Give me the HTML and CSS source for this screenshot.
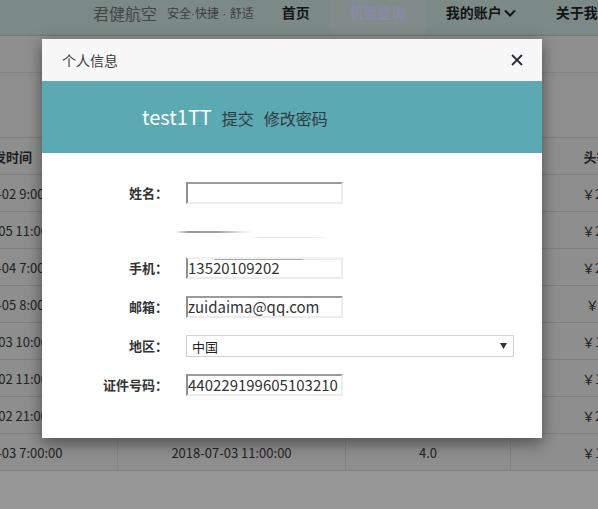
FILE: index.html
```html
<!DOCTYPE html>
<html lang="zh-CN">
<head>
<meta charset="utf-8">
<title>个人信息</title>
<link rel="stylesheet" href="styles.css">
</head>
<body>
<header class="navbar">
  <div class="brand">
    <span class="brand-name">君健航空</span>
    <span class="slogan">安全·快捷 · 舒适</span>
  </div>
  <ul class="nav">
    <li>首页</li>
    <li class="active">机票查询</li>
    <li>我的账户<svg class="chev" width="12" height="8" viewBox="0 0 12 8"><polyline points="1,1.5 6,6.5 11,1.5" fill="none" stroke="#151515" stroke-width="2"/></svg></li>
    <li>关于我们</li>
  </ul>
</header>

<section class="search">
  <div class="search-top"></div>
  <div class="search-bottom"></div>
</section>

<table class="flights">
  <thead>
    <tr><th>出发时间</th><th>到达时间</th><th>飞行时长</th><th>头等舱</th></tr>
  </thead>
  <tbody>
    <tr><td>2018-07-02 9:00:00</td><td>2018-07-02 12:00:00</td><td>3.0</td><td>￥2400</td></tr>
    <tr><td>2018-07-05 11:00:00</td><td>2018-07-05 14:00:00</td><td>3.0</td><td>￥2100</td></tr>
    <tr><td>2018-07-04 7:00:00</td><td>2018-07-04 10:00:00</td><td>3.0</td><td>￥2200</td></tr>
    <tr><td>2018-07-05 8:00:00</td><td>2018-07-05 10:00:00</td><td>2.0</td><td>￥800</td></tr>
    <tr><td>2018-07-03 10:00:00</td><td>2018-07-03 13:00:00</td><td>3.0</td><td>￥1500</td></tr>
    <tr><td>2018-07-02 11:00:00</td><td>2018-07-02 14:00:00</td><td>3.0</td><td>￥1800</td></tr>
    <tr><td>2018-07-02 21:00:00</td><td>2018-07-03 00:00:00</td><td>3.0</td><td>￥2000</td></tr>
    <tr><td>2018-07-03 7:00:00</td><td>2018-07-03 11:00:00</td><td>4.0</td><td>￥1300</td></tr>
  </tbody>
</table>

<div class="modal">
  <div class="modal-header">
    <span class="modal-title">个人信息</span>
    <svg class="close" width="12" height="12" viewBox="0 0 12 12"><path d="M1 1 L11 11 M11 1 L1 11" stroke="#2b2b33" stroke-width="1.8" fill="none"/></svg>
  </div>
  <div class="banner">
    <span class="user">test1TT</span>
    <a class="link">提交</a>
    <a class="link">修改密码</a>
  </div>
  <div class="modal-body">
    <label class="label">姓名<span class="colon">：</span></label>
    <div class="field"></div>

    <span class="label"></span>
    <div class="ghost">
      <div class="ghost-line1"></div>
      <div class="ghost-line2"></div>
    </div>

    <label class="label">手机<span class="colon">：</span></label>
    <div class="field field-phone">13520109202</div>

    <label class="label">邮箱<span class="colon">：</span></label>
    <div class="field"><span class="misspelt">zuidaima</span>@<span class="misspelt">qq</span>.com</div>

    <label class="label">地区<span class="colon">：</span></label>
    <div class="select"><span>中国</span><svg class="arrow" width="7" height="6" viewBox="0 0 7 6"><path d="M0 0 H7 L3.5 6 Z" fill="#333"/></svg></div>

    <label class="label">证件号码<span class="colon">：</span></label>
    <div class="field">440229199605103210</div>
  </div>
</div>
</body>
</html>
```
FILE: styles.css
```css
html, body {
  margin: 0;
  padding: 0;
  overflow: hidden;
  background: #979797;
  font-family: "Noto Sans CJK SC", "Noto Sans", sans-serif;
}

.navbar {
  height: 35px;
  background: #7b8a86;
  border-bottom: 1px solid #6c7673;
  display: flex;
  padding-left: 93px;
  white-space: nowrap;
}

.brand {
  display: flex;
  align-items: center;
  height: 25px;
}

.brand-name {
  font-size: 16px;
  color: #434545;
  margin-right: 10px;
}

.slogan {
  font-family: "Liberation Sans", "Noto Sans CJK SC", sans-serif;
  font-size: 12px;
  color: #3b3d3d;
}

.nav {
  list-style: none;
  margin: 0 0 0 8px;
  padding: 0;
  display: flex;
}

.nav li {
  padding: 0 20px;
  font-size: 14px;
  font-weight: bold;
  color: #141414;
  line-height: 25px;
  height: 35px;
  display: flex;
  align-items: flex-start;
}

.nav li.active {
  background: #818b89;
  color: #8a8aa6;
}

.chev {
  margin: 9px 0 0 2px;
}

.search {
  background: #8f8f8f;
}

.search-top {
  height: 36px;
  border-bottom: 1px solid #828282;
}

.search-bottom {
  height: 64px;
}

.flights {
  border-collapse: collapse;
  margin-left: -106px;
  background: #8e8e8e;
  color: #222;
  font-size: 13px;
  table-layout: fixed;
  width: 797px;
}

.flights th:nth-child(1), .flights td:nth-child(1) { width: 222px; }
.flights th:nth-child(2), .flights td:nth-child(2) { width: 227px; }
.flights th:nth-child(3), .flights td:nth-child(3) { width: 164px; }
.flights th:nth-child(4), .flights td:nth-child(4) { width: 184px; }

.flights th, .flights td {
  height: 36px;
  padding: 0;
  text-align: center;
  border-top: 1px solid #7e7e7e;
  border-bottom: 1px solid #7e7e7e;
  border-left: 1px solid #838383;
  white-space: nowrap;
  overflow: hidden;
}

.flights th {
  font-weight: bold;
  color: #1e1e1e;
}

.modal {
  position: absolute;
  left: 42px;
  top: 39px;
  width: 500px;
  background: #fff;
  box-shadow: 0 5px 15px rgba(0, 0, 0, 0.45);
}

.modal-header {
  height: 42px;
  box-sizing: border-box;
  background: #f7f7f7;
  display: flex;
  align-items: center;
  justify-content: space-between;
  padding: 0 19px 0 20px;
}

.modal-title {
  font-size: 14px;
  color: #3a3a3a;
}

.banner {
  height: 72px;
  box-sizing: border-box;
  background: #5ba9b3;
  padding: 22px 0 0 100px;
  display: flex;
  align-items: baseline;
  line-height: 28px;
}

.user {
  font-size: 20px;
  color: #fff;
  margin-right: 10px;
}

.link {
  font-size: 16px;
  color: #2f3a3c;
  margin-right: 10px;
}

.modal-body {
  display: grid;
  grid-template-columns: 126px 330px;
  column-gap: 18px;
  row-gap: 17px;
  padding: 29px 0 42px;
}

.label {
  text-align: right;
  font-size: 13px;
  font-weight: bold;
  color: #333;
  line-height: 22px;
}

.colon {
  font-family: "Noto Sans CJK JP", "Noto Sans CJK SC", sans-serif;
}

.field {
  box-sizing: border-box;
  width: 157px;
  height: 22px;
  border: 2px solid;
  border-color: #9a9a9a #ececec #ececec #8f8f8f;
  font-size: 15px;
  line-height: 18px;
  color: #333;
  white-space: nowrap;
  overflow: hidden;
}

.field-phone {
  border-top-color: #f2f2f2;
  background: linear-gradient(to right, transparent 25px, #a9a9a9 27px, #a9a9a9 114px, #e4e4e4 116px, #f0f0f0) top left / 100% 1px no-repeat;
}

.misspelt {
  text-decoration: underline wavy #e23b3b;
  text-decoration-thickness: 1px;
  text-underline-offset: 2px;
}

.ghost {
  height: 19px;
  display: flex;
  flex-direction: column;
}

.ghost-line1 {
  margin: 10px 0 0 -11px;
  width: 78px;
  height: 2px;
  background: linear-gradient(to right, rgba(150,150,150,0), #9a9a9a 18%, #a0a0a0 55%, rgba(200,200,200,0.6) 80%, rgba(230,230,230,0));
}

.ghost-line2 {
  margin: 4px 0 0 62px;
  width: 79px;
  height: 1px;
  background: linear-gradient(to right, rgba(220,220,220,0), #e2e2e2 20%, #e6e6e6 80%, rgba(230,230,230,0));
}

.select {
  box-sizing: border-box;
  width: 328px;
  height: 22px;
  border: 1px solid #d2d2d2;
  display: flex;
  align-items: center;
  justify-content: space-between;
  padding: 0 5px 0 5px;
  font-size: 13px;
  color: #222;
}

.arrow {
  margin-right: 1px;
}
```
